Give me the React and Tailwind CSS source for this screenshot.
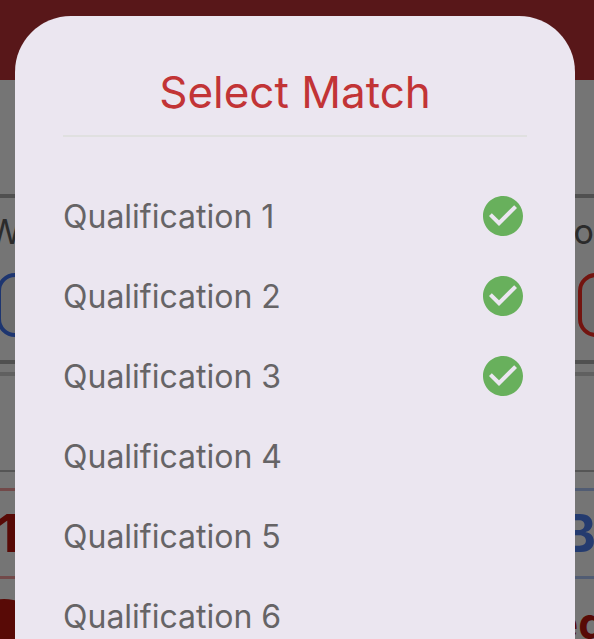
import React, { useState } from "react";
import { MdCheckCircle } from "react-icons/md";

const MATCHES = [
  { id: 1, name: "Qualification 1", done: true },
  { id: 2, name: "Qualification 2", done: true },
  { id: 3, name: "Qualification 3", done: true },
  { id: 4, name: "Qualification 4", done: false },
  { id: 5, name: "Qualification 5", done: false },
  { id: 6, name: "Qualification 6", done: false },
];

function ScoutingPage() {
  return (
    <div className="h-screen overflow-hidden bg-white" aria-hidden="true">
      <div className="h-20 bg-[#c03438]" />
      <div className="h-[114px]" />

      <div className="h-[170px] border-y-4 border-[#aeaeae] pt-3.5">
        <div className="-ml-3 flex justify-between text-[34px] leading-10 text-[#5f5f5f]">
          <span>W</span>
          <span>o</span>
        </div>
        <div className="-mr-20 -ml-[3px] mt-[21px] flex justify-between">
          <div className="h-16 w-24 rounded-[18px] border-4 border-[#3f75f3] bg-[#ededed]" />
          <div className="h-16 w-24 rounded-[18px] border-4 border-[#fb2c22] bg-[#ededed]" />
        </div>
      </div>

      <div className="mt-2 h-[100px] border-t-4 border-b-2 border-t-[#d1d1d1] border-b-[#b9b9b9]" />

      <div className="mt-4 flex h-[91px] justify-between">
        <div className="flex w-1/2 items-center border-y-[3px] border-[#f9a0a0]">
          <span className="-ml-1 text-[52px] leading-none font-bold text-[#c0160e]">1</span>
        </div>
        <div className="flex w-1/2 items-center justify-end border-y-[3px] border-[#b0c8fb]">
          <span className="-mr-0.5 text-[52px] leading-none font-bold text-[#5082f2]">B</span>
        </div>
      </div>

      <div className="flex items-start justify-between pt-5">
        <div className="-ml-11 size-24 rounded-full bg-[#c0160e]" />
        <span className="-mr-3 text-[44px] leading-12 font-bold text-[#c0160e]">ed</span>
      </div>
    </div>
  );
}

function MatchRow({ match, onSelect }) {
  return (
    <li>
      <button
        type="button"
        onClick={() => onSelect(match.id)}
        className="flex h-20 w-full items-center justify-between text-left text-[32px] text-[#666466]"
      >
        <span className="pt-0.5">{match.name}</span>
        {match.done && <MdCheckCircle className="size-12 text-[#68b05c]" />}
      </button>
    </li>
  );
}

export default function App() {
  const [, setSelected] = useState(null);

  return (
    <div className="font-['Inter','Liberation_Sans',sans-serif]">
      <ScoutingPage />
      <div className="fixed inset-0 overflow-hidden bg-black/54 pt-4 pr-[19px] pl-[15px]">
        <div
          role="dialog"
          aria-labelledby="select-match"
          className="min-h-screen rounded-t-[56px] bg-[#ebe6f0] px-12"
        >
          <h1
            id="select-match"
            className="border-b-2 border-[#e0e0e0] pt-12 pb-3.5 text-center text-[44px] leading-[57px] text-[#c23436]"
          >
            Select Match
          </h1>
          <ul className="pt-[39px]">
            {MATCHES.map((match) => (
              <MatchRow key={match.id} match={match} onSelect={setSelected} />
            ))}
          </ul>
        </div>
      </div>
    </div>
  );
}
